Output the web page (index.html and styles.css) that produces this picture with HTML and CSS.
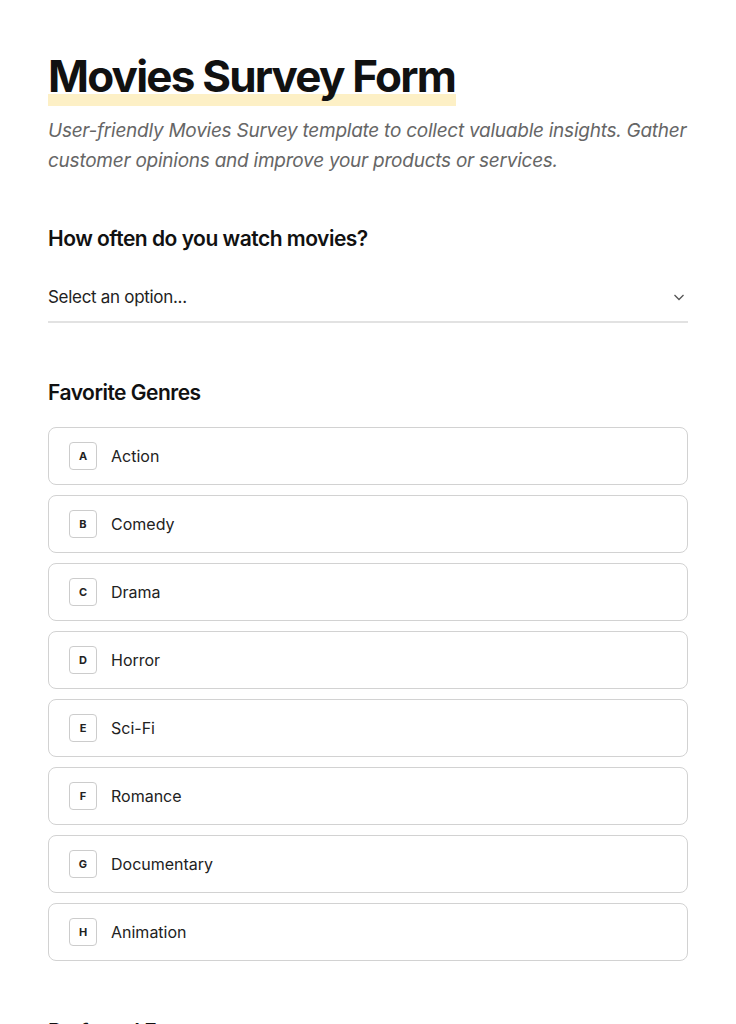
FILE: index.html
```html
<!DOCTYPE html>
<html lang="en">
<head>
    <meta charset="UTF-8">
    <meta name="viewport" content="width=device-width, initial-scale=1.0">
    <title>Movies Survey Form</title>
    <link rel="stylesheet" href="styles.css">
</head>
<body>
    <div class="survey">
        <h1 class="title"><span>Movies Survey Form</span></h1>
        <p class="intro">User-friendly Movies Survey template to collect valuable insights. Gather customer opinions and improve your products or services.</p>

        <div class="question">
            <h2>How often do you watch movies?</h2>
            <div class="select">
                <span>Select an option...</span>
                <svg width="14" height="14" viewBox="0 0 14 14" fill="none" stroke="#555" stroke-width="1.3">
                    <path d="M2.5 5l4.5 4.5 4.5-4.5"/>
                </svg>
            </div>
        </div>

        <div class="question genres">
            <h2>Favorite Genres</h2>
            <div class="options">
                <div class="option"><span class="key">A</span>Action</div>
                <div class="option"><span class="key">B</span>Comedy</div>
                <div class="option"><span class="key">C</span>Drama</div>
                <div class="option"><span class="key">D</span>Horror</div>
                <div class="option"><span class="key">E</span>Sci-Fi</div>
                <div class="option"><span class="key">F</span>Romance</div>
                <div class="option"><span class="key">G</span>Documentary</div>
                <div class="option"><span class="key">H</span>Animation</div>
            </div>
        </div>

        <div class="question format">
            <h2>Preferred Format</h2>
        </div>
    </div>
</body>
</html>
```

FILE: styles.css
```css
body {
    margin: 0;
    background: #fff;
    font-family: 'Inter', 'Open Sans', sans-serif;
    color: #111;
}
.survey {
    padding: 48px 48px 0;
}
.title {
    margin: 0;
    font-size: 44px;
    font-weight: 700;
    letter-spacing: -1.8px;
    line-height: 48px;
}
.title span {
    display: inline-block;
    padding: 4px 1px 6px 0;
    box-shadow: inset 0 -12px #fdf0c6;
}
.intro {
    margin: 10px 0 0;
    font-size: 19px;
    font-style: italic;
    line-height: 30px;
    color: #666;
    letter-spacing: -0.25px;
}
.question {
    margin-top: 48px;
}
.question h2 {
    margin: 0;
    font-size: 21px;
    font-weight: 600;
    letter-spacing: -0.5px;
    line-height: 30px;
}
.select {
    display: flex;
    justify-content: space-between;
    align-items: center;
    margin-top: 33px;
    padding: 0 2px 14px 0;
    border-bottom: 2px solid #e2e2e2;
    font-size: 17px;
    color: #222;
    letter-spacing: -0.3px;
}
.genres {
    margin-top: 55px;
}
.format {
    margin-top: 56px;
}
.options {
    display: flex;
    flex-direction: column;
    gap: 10px;
    margin-top: 19px;
}
.option {
    display: flex;
    align-items: center;
    gap: 14px;
    height: 56px;
    padding: 0 20px;
    border: 1px solid #d2d2d2;
    border-radius: 8px;
    font-size: 16px;
    color: #222;
}
.key {
    display: flex;
    justify-content: center;
    align-items: center;
    width: 26px;
    height: 26px;
    border: 1px solid #ccc;
    border-radius: 4px;
    font-size: 11px;
    font-weight: 700;
}
```
